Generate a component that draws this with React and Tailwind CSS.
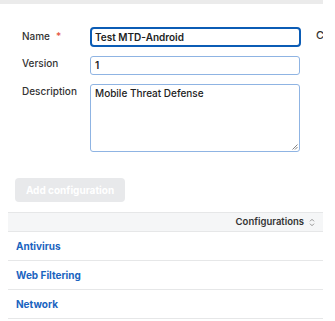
import React from "react";

export default function App() {
  return (
    <div className="w-[335px] h-[321px] bg-white overflow-hidden" style={{ fontFamily: "Inter, 'Noto Sans', sans-serif" }}>
      <div className="w-[323px] overflow-hidden">
        <div className="h-[4px] bg-[#ebebeb]" />
        <div className="pt-[23px] pl-[22px] flex flex-col gap-[9px]">
          <div className="flex items-start">
            <div className="w-[68px] shrink-0 pt-[3px] text-[10px] font-medium text-[#333] leading-[13px] flex">
              <span>Name</span>
              <span className="ml-[6px] text-[#e5533d]">*</span>
            </div>
            <div className="w-[211px] h-[20px] shrink-0 border-2 border-[#0b5cb5] rounded-[4px] flex items-center px-[3px] text-[10px] font-semibold text-[#222]">
              Test MTD-Android
            </div>
            <div className="ml-[15px] shrink-0 pt-[2px] text-[11px] font-medium text-[#333] leading-[13px] whitespace-nowrap">C</div>
          </div>
          <div className="flex items-start">
            <div className="w-[68px] shrink-0 pt-[1px] text-[10px] font-medium text-[#333] leading-[13px]">Version</div>
            <div className="w-[210px] h-[19px] shrink-0 border border-[#8fb4e3] rounded-[3px] flex items-center px-[4px] text-[10px] font-semibold text-[#222]">
              1
            </div>
          </div>
          <div className="flex items-start">
            <div className="w-[68px] shrink-0 pt-[1px] text-[10px] font-medium text-[#333] leading-[13px]">Description</div>
            <div className="relative w-[210px] h-[68px] shrink-0 border border-[#8fb4e3] rounded-[3px] px-[4px] pt-[2px] text-[10px] font-medium text-[#222] leading-[13px]">
              Mobile Threat Defense
              <svg className="absolute right-[1px] bottom-[1px]" width="7" height="7" viewBox="0 0 7 7">
                <path d="M6.5 1.5 L1.5 6.5 M6.5 4 L4 6.5" stroke="#777" strokeWidth="0.9" />
              </svg>
            </div>
          </div>
        </div>
        <div className="pl-[15px] mt-[26px]">
          <div className="w-[110px] h-[24px] rounded-[4px] bg-[#e8e9eb] text-white text-[10px] font-bold flex items-center justify-center">
            Add configuration
          </div>
        </div>
        <div className="ml-[8px] mt-[10px]">
          <div className="h-[20px] bg-[#f5f6f7] border-t border-b border-[#e6e7e8] flex items-center justify-end pr-[8px] text-[9.5px] font-semibold text-[#333]">
            <span>Configurations</span>
            <svg className="ml-[5px]" width="6" height="9" viewBox="0 0 6 9">
              <path d="M1 3.3 L3 1.3 L5 3.3 M1 5.7 L3 7.7 L5 5.7" fill="none" stroke="#888" strokeWidth="0.9" />
            </svg>
          </div>
          {["Antivirus", "Web Filtering", "Network"].map((t) => (
            <div key={t} className="h-[29px] border-b border-[#e6e7e8] flex items-center pl-[8px] text-[10px] font-bold text-[#1a64c0]">
              {t}
            </div>
          ))}
        </div>
      </div>
    </div>
  );
}
